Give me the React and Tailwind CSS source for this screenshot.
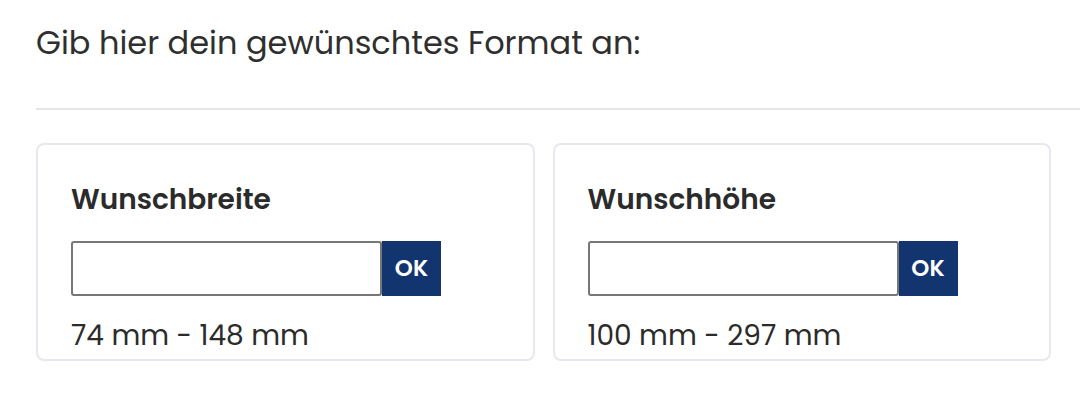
import React from "react";

const fields = [
  { label: "Wunschbreite", range: "74 mm - 148 mm" },
  { label: "Wunschhöhe", range: "100 mm - 297 mm" },
];

const SizeCard = ({ label, range }) => (
  <div className="border-2 border-[#e5e8f0] rounded-lg pl-[33px] pt-[37px] pb-[5px]">
    <p className="text-[28px] font-semibold text-[#2b2b2b] leading-[36px]">{label}</p>
    <div className="flex mt-[23px]">
      <input
        type="text"
        className="w-[311px] h-[55px] border-2 border-[#777] rounded-[3px] bg-white outline-none px-2"
      />
      <button className="w-[59px] h-[55px] bg-[#12346f] text-white text-[23px] font-semibold">
        OK
      </button>
    </div>
    <p className="text-[28px] text-[#2b2b2b] leading-[36px] mt-[22px]">{range}</p>
  </div>
);

export default function App() {
  return (
    <div className="w-[1080px] h-[402px] bg-white font-['Poppins','Inter',sans-serif] pl-[36px]">
      <h2 className="pt-[23px] text-[32px] text-[#2f2f2f] leading-[40px]">
        Gib hier dein gewünschtes Format an:
      </h2>
      <div className="mt-[45px] border-t-2 border-[#e6e6e6]" />
      <div className="grid grid-cols-2 gap-[18px] w-[1015px] mt-[33px]">
        {fields.map((f) => (
          <SizeCard key={f.label} {...f} />
        ))}
      </div>
    </div>
  );
}
